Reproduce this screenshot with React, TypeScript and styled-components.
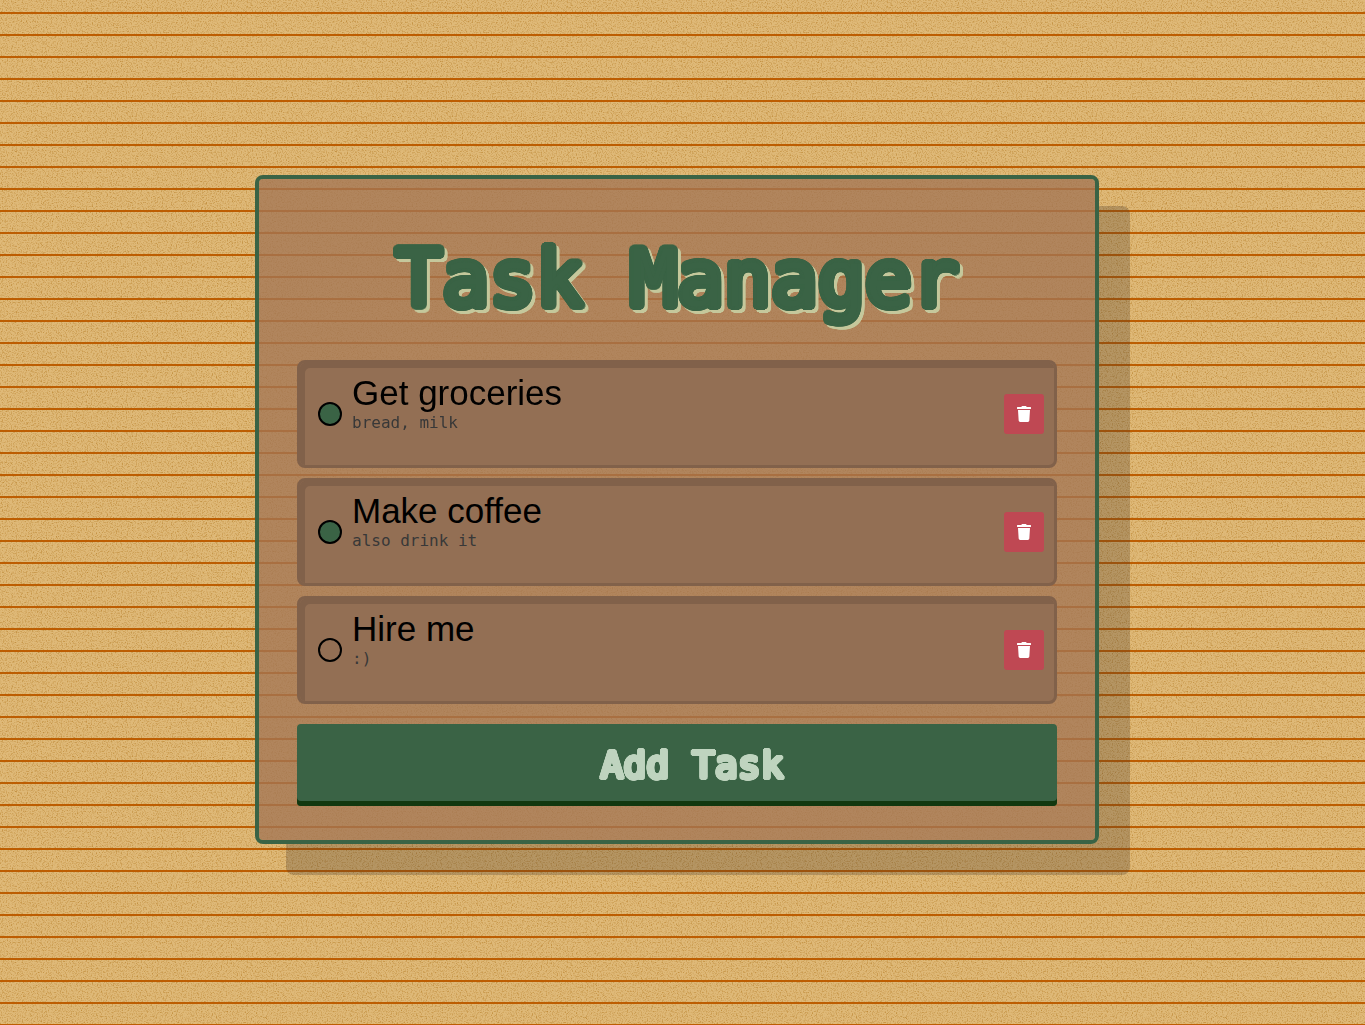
import { useState } from "react";
import styled, { createGlobalStyle } from "styled-components";
import { FaTrash } from "react-icons/fa";

const colors = {
  green: "#3a6345",
  darkGreen: "#12380f",
  mint: "#bfd4bf",
  cream: "#c5c89c",
};

// Thickens and rounds lettering by stacking copies of it around a circle.
const ring = (radius: number, color: string, shift = 0) =>
  Array.from({ length: 24 }, (_, i) => {
    const angle = (i / 24) * Math.PI * 2;
    const x = (Math.cos(angle) * radius + shift).toFixed(2);
    const y = (Math.sin(angle) * radius + shift).toFixed(2);
    return `${x}px ${y}px 0 ${color}`;
  }).join(", ");

const GlobalStyle = createGlobalStyle`
  * { box-sizing: border-box; }
  body {
    margin: 0;
    font-family: "Liberation Sans", Arial, sans-serif;
    background: repeating-linear-gradient(
      #dfb978 0 12px,
      #bf5c00 12px 14px,
      #dfb978 14px 22px
    );
  }
`;

const Grain = styled.svg`
  position: fixed;
  inset: 0;
  width: 100%;
  height: 100%;
  z-index: -1;
`;

const Page = styled.main`
  min-height: 100vh;
  display: flex;
  align-items: center;
  justify-content: center;
  padding: 0 11px 6px 0;
`;

const Card = styled.section`
  width: 100%;
  max-width: 844px;
  padding: 54px 38px 34px;
  border: 4px solid ${colors.green};
  border-radius: 8px;
  background: rgba(162, 117, 85, 0.77);
  background-clip: padding-box;
  box-shadow: 31px 31px 0 rgba(72, 56, 45, 0.28);
`;

const Title = styled.h1`
  margin: 0 0 34px;
  text-align: center;
  font: 400 78px/93px "DejaVu Sans Mono", monospace;
  color: ${colors.green};
  text-shadow: ${ring(4, colors.green)}, ${ring(4, colors.cream, 3)};
`;

const TaskList = styled.ul`
  list-style: none;
  margin: 0 0 20px;
  padding: 0;
  display: flex;
  flex-direction: column;
  gap: 10px;
`;

const TaskItem = styled.li`
  display: flex;
  align-items: center;
  gap: 10px;
  padding: 0 10px 0 18px;
  border: 3px solid #81614a;
  border-radius: 8px;
  background: #936f54;
  box-shadow: inset 5px 5px 0 #81614a;
`;

const Check = styled.input`
  appearance: none;
  flex: none;
  width: 24px;
  height: 24px;
  margin: 0;
  border: 2px solid #000;
  border-radius: 50%;
  cursor: pointer;

  &:checked {
    background: ${colors.green};
  }
`;

const TaskText = styled.label`
  flex: 1;
  min-width: 0;
  padding: 9px 0 33px;
`;

const TaskName = styled.span`
  display: block;
  font-size: 35px;
  line-height: 41px;
  color: #000;
`;

const TaskNote = styled.span`
  display: block;
  font: 16px/19px "DejaVu Sans Mono", monospace;
  color: #383838;
`;

const DeleteButton = styled.button`
  flex: none;
  display: grid;
  place-items: center;
  width: 40px;
  height: 40px;
  padding: 0;
  border: 0;
  border-radius: 3px;
  background: #bf4853;
  color: #fff;
  cursor: pointer;
`;

const AddButton = styled.button`
  display: block;
  width: 100%;
  padding: 15px 0 15px 30px;
  border: 0;
  border-radius: 4px;
  background: ${colors.green};
  box-shadow: inset 0 -5px 0 ${colors.darkGreen};
  font: 400 38px/52px "DejaVu Sans Mono", monospace;
  color: ${colors.mint};
  text-shadow: ${ring(2, colors.mint)};
  cursor: pointer;
`;

const initialTasks = [
  { id: "groceries", name: "Get groceries", note: "bread, milk", done: true },
  { id: "coffee", name: "Make coffee", note: "also drink it", done: true },
  { id: "hire", name: "Hire me", note: ":)", done: false },
];

export default function App() {
  const [tasks, setTasks] = useState(initialTasks);

  const toggle = (id: string) =>
    setTasks(tasks.map((t) => (t.id === id ? { ...t, done: !t.done } : t)));
  const remove = (id: string) => setTasks(tasks.filter((t) => t.id !== id));
  const add = () =>
    setTasks([...tasks, { id: String(Date.now()), name: "New task", note: "", done: false }]);

  return (
    <>
      <GlobalStyle />
      <Grain aria-hidden="true">
        <filter id="grain" x="0" y="0" width="100%" height="100%" colorInterpolationFilters="sRGB">
          <feTurbulence type="fractalNoise" baseFrequency="0.8" numOctaves="3" seed="4" />
          <feColorMatrix values="0 0 0 0 0.66  0 0 0 0 0.42  0 0 0 0 0.06  1.3 0 0 0 -0.6" />
        </filter>
        <rect width="100%" height="100%" filter="url(#grain)" />
      </Grain>
      <Page>
        <Card>
          <Title>Task Manager</Title>
          <TaskList>
            {tasks.map((task) => (
              <TaskItem key={task.id}>
                <Check
                  type="checkbox"
                  id={task.id}
                  checked={task.done}
                  onChange={() => toggle(task.id)}
                />
                <TaskText htmlFor={task.id}>
                  <TaskName>{task.name}</TaskName>
                  <TaskNote>{task.note}</TaskNote>
                </TaskText>
                <DeleteButton aria-label={`Delete ${task.name}`} onClick={() => remove(task.id)}>
                  <FaTrash size={16} />
                </DeleteButton>
              </TaskItem>
            ))}
          </TaskList>
          <AddButton onClick={add}>Add Task</AddButton>
        </Card>
      </Page>
    </>
  );
}
